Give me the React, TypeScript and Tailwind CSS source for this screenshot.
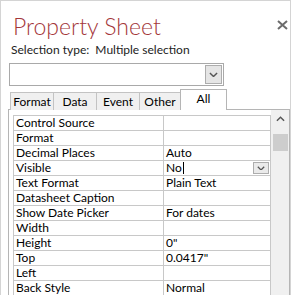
import React from 'react';

const rows: [string, string][] = [
  ['Control Source', ''],
  ['Format', ''],
  ['Decimal Places', 'Auto'],
  ['Visible', 'No'],
  ['Text Format', 'Plain Text'],
  ['Datasheet Caption', ''],
  ['Show Date Picker', 'For dates'],
  ['Width', ''],
  ['Height', '0"'],
  ['Top', '0.0417"'],
  ['Left', ''],
  ['Back Style', 'Normal'],
];

function Chevron({ size = 9 }: { size?: number }) {
  return (
    <svg width={size} height={size * 0.6} viewBox="0 0 10 6" fill="none">
      <path d="M1 1l4 4 4-4" stroke="#555" strokeWidth="1.6" />
    </svg>
  );
}

export default function App() {
  const font = { fontFamily: '"Segoe UI", Lato, "Noto Sans", sans-serif' };
  return (
    <div
      className="relative w-[291px] h-[295px] overflow-hidden bg-white border-l border-t border-r border-[#d4d4d4] text-black"
      style={font}
    >
      {/* close */}
      <svg className="absolute left-[276px] top-[19px]" width="11" height="10" viewBox="0 0 11 10">
        <path d="M1 1l9 8M10 1L1 9" stroke="#6b6b6b" strokeWidth="2" />
      </svg>

      <div className="pl-[12px] pt-[10px] text-[23px] leading-[30px] font-light text-[#a4373a]">
        Property Sheet
      </div>
      <div className="pl-[10px] mt-[1px] text-[12px] leading-[16px] text-[#222]">
        Selection type:&nbsp; Multiple selection
      </div>

      <div className="ml-[8px] mt-[5px] w-[215px] h-[23px] border border-[#a9a9a9] flex justify-end items-center pr-[1px]">
        <div className="w-[17px] h-[19px] bg-[#e5e5e5] border border-[#adadad] flex items-center justify-center">
          <Chevron />
        </div>
      </div>

      {/* tabs */}
      <div className="flex items-end ml-[9px] mt-[4px] h-[20px] text-[12px] leading-[14px]">
        {['Format', 'Data', 'Event', 'Other'].map((t) => (
          <div
            key={t}
            className={`h-[18px] bg-[#f0f0f0] border border-[#c3c3c3] border-b-0 -mr-[1px] flex items-center justify-center ${
              t === 'Other' ? 'w-[42px]' : 'w-[44px]'
            }`}
          >
            {t}
          </div>
        ))}
        <div className="relative z-10 h-[21px] w-[47px] bg-white border border-[#b5b5b5] border-b-0 flex items-start justify-center pt-[2px]">
          All
        </div>
      </div>

      {/* panel */}
      <div className="ml-[7px] w-[282px] h-[200px] -mt-[1px] border-l border-t border-r border-[#b5b5b5] flex pl-[4px] pt-[5px]">
        <div className="w-[258px] border-l border-t border-r border-[#c8c8c8] text-[12px] leading-[14px]">
          {rows.map(([k, v]) => (
            <div key={k} className="flex h-[15px] border-b border-[#c8c8c8]">
              <div className="w-[150px] border-r border-[#c8c8c8] pl-[2px] whitespace-nowrap">{k}</div>
              <div className="flex-1 pl-[2px] flex items-start whitespace-nowrap relative">
                {v}
                {k === 'Visible' && (
                  <>
                    <span className="ml-[1px] mt-[1px] w-px h-[12px] bg-black" />
                    <div className="absolute right-[1px] top-[1px] w-[16px] h-[12px] bg-[#eaeaea] border border-[#adadad] flex items-center justify-center">
                      <Chevron size={8} />
                    </div>
                  </>
                )}
              </div>
            </div>
          ))}
        </div>
        <div className="w-[18px] -mt-[5px] bg-[#f0f0f0] flex flex-col items-center">
          <svg className="mt-[6px]" width="9" height="6" viewBox="0 0 10 6" fill="none">
            <path d="M1 5l4-4 4 4" stroke="#555" strokeWidth="1.6" />
          </svg>
          <div className="mt-[12px] w-[15px] h-[17px] bg-[#cdcdcd]" />
        </div>
      </div>
    </div>
  );
}
